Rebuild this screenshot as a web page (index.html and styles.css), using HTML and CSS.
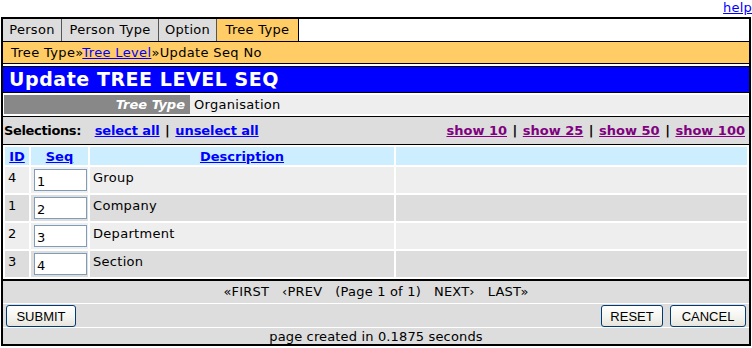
FILE: index.html
```html
<!DOCTYPE html>
<html lang="en">
<head>
  <meta charset="UTF-8" />
  <title>Update TREE LEVEL SEQ</title>
  <link rel="stylesheet" href="styles.css">
</head>
<body>
  <div class="help"><a href="#">help</a></div>
  <div class="frame">
    <div class="tabs">
      <a class="tab tab-person" href="#">Person</a>
      <a class="tab tab-ptype" href="#">Person Type</a>
      <a class="tab tab-option" href="#">Option</a>
      <a class="tab tab-tree active" href="#">Tree Type</a>
    </div>
    <div class="crumb">Tree Type&raquo;<a href="#">Tree Level</a>&raquo;Update Seq No</div>
    <h1 class="title">Update TREE LEVEL SEQ</h1>
    <div class="parent">
      <div class="parent-label">Tree Type</div>
      <div class="parent-value">Organisation</div>
    </div>
    <div class="selections">
      <div class="sel-left"><span class="sel-title">Selections:</span> <a href="#">select all</a><span class="sep">|</span><a href="#">unselect all</a></div>
      <div class="sel-right"><a href="#">show 10</a><span class="sep">|</span><a href="#">show 25</a><span class="sep">|</span><a href="#">show 50</a><span class="sep">|</span><a href="#">show 100</a></div>
    </div>
    <table class="grid">
      <thead>
        <tr>
          <th class="c-id"><a href="#">ID</a></th>
          <th class="c-seq"><a href="#">Seq</a></th>
          <th class="c-desc"><a href="#">Description</a></th>
          <th></th>
        </tr>
      </thead>
      <tbody>
        <tr><td>4</td><td><input type="text" value="1"></td><td>Group</td><td></td></tr>
        <tr><td>1</td><td><input type="text" value="2"></td><td>Company</td><td></td></tr>
        <tr><td>2</td><td><input type="text" value="3"></td><td>Department</td><td></td></tr>
        <tr><td>3</td><td><input type="text" value="4"></td><td>Section</td><td></td></tr>
      </tbody>
    </table>
    <div class="pager">
      <span>&laquo;FIRST</span>
      <span>&lsaquo;PREV</span>
      <span>(Page 1 of 1)</span>
      <span>NEXT&rsaquo;</span>
      <span>LAST&raquo;</span>
    </div>
    <div class="actions">
      <button class="btn-submit">SUBMIT</button>
      <div class="actions-right">
        <button class="btn-reset">RESET</button>
        <button class="btn-cancel">CANCEL</button>
      </div>
    </div>
    <div class="footer">page created in 0.1875 seconds</div>
  </div>
</body>
</html>
```

FILE: styles.css
```css
body {
  margin: 0;
  font-family: "DejaVu Sans", Verdana, sans-serif;
  font-size: 13px;
  letter-spacing: 0.3px;
  color: #000;
  background: #fff;
}
a {
  color: #00f;
}
.help {
  text-align: right;
  height: 17px;
  line-height: 15px;
  letter-spacing: 0.2px;
}
.frame {
  margin-left: 1px;
  width: 750px;
  box-sizing: border-box;
  border: 2px solid #000;
}
.tabs {
  display: flex;
  height: 22px;
}
.tab {
  display: block;
  text-align: center;
  line-height: 22px;
  color: #000;
  text-decoration: none;
  background: #ddd;
  border-right: 1px solid #555;
}
.tab-person { width: 58px; }
.tab-ptype { width: 96px; }
.tab-option { width: 57px; }
.tab-tree { width: 81px; }
.tab.active {
  background: #fc6;
  border-right: 1px solid #000;
}
.crumb {
  background: #fc6;
  border-top: 1px solid #000;
  border-bottom: 1px solid #000;
  height: 21px;
  line-height: 21px;
  padding-left: 8px;
  letter-spacing: 0.35px;
}
.title {
  margin: 2px 0 0;
  background: #00f;
  color: #fff;
  border-top: 1px solid #000;
  border-bottom: 1px solid #000;
  height: 25px;
  line-height: 25px;
  font-size: 19px;
  letter-spacing: 0.55px;
  padding-left: 6px;
}
.parent {
  display: flex;
  margin: 2px 1px;
  height: 19px;
  line-height: 19px;
}
.parent-label {
  width: 181px;
  padding-right: 5px;
  background: #888;
  color: #fff;
  font-weight: bold;
  font-style: italic;
  text-align: right;
  letter-spacing: 0;
  flex-shrink: 0;
}
.parent-value {
  flex: 1;
  background: #eee;
  padding-left: 4px;
}
.selections {
  display: flex;
  justify-content: space-between;
  background: #ddd;
  border-top: 1px solid #000;
  border-bottom: 1px solid #000;
  height: 27px;
  line-height: 27px;
  padding: 0 4px 0 1px;
  font-weight: bold;
  letter-spacing: 0;
}
.sel-title {
  letter-spacing: -0.35px;
  margin-right: 9px;
}
.sel-left a {
  letter-spacing: -0.1px;
}
.sep {
  margin: 0 5.5px;
}
.sel-right a {
  color: #800080;
}
.grid {
  width: 100%;
  border-collapse: separate;
  border-spacing: 2px;
  border-bottom: 1px solid #000;
}
.grid th {
  background: #cef;
  height: 18px;
  padding: 0;
  letter-spacing: 0;
}
.grid th a {
  font-weight: bold;
}
.c-id { width: 24px; }
.c-seq { width: 57px; }
.c-desc { width: 304px; }
.grid td {
  box-sizing: border-box;
  height: 26px;
  padding: 3px 0 0 3px;
  vertical-align: top;
  line-height: 16px;
}
.grid tbody tr:nth-child(odd) td { background: #eee; }
.grid tbody tr:nth-child(even) td { background: #ddd; }
.grid td:nth-child(2) {
  padding: 2px 0 0 3px;
}
.grid input {
  display: block;
  width: 53px;
  height: 22px;
  box-sizing: border-box;
  margin: 0;
  border: 1px solid #7f9db9;
  font-family: "DejaVu Sans", Verdana, sans-serif;
  font-size: 13px;
  padding: 2px 2px 0;
}
.pager {
  display: flex;
  justify-content: center;
  gap: 13px;
  background: #ddd;
  border-top: 1px solid #000;
  height: 22px;
  line-height: 22px;
  letter-spacing: 0.2px;
}
.actions {
  display: flex;
  justify-content: space-between;
  align-items: flex-start;
  background: #ddd;
  border-top: 1px solid #fff;
  height: 24px;
  padding: 1px 3px 0;
  box-sizing: border-box;
}
.actions-right {
  display: flex;
  gap: 7px;
}
.actions button {
  font-family: "Liberation Sans", Arial, sans-serif;
  font-size: 13px;
  letter-spacing: 0;
  height: 22px;
  padding: 0;
  color: #000;
  background: linear-gradient(#fff, #f3f3ee 60%, #e6e4dc);
  border: 1px solid #003c74;
  border-radius: 3px;
}
.actions .btn-submit { width: 70px; }
.actions .btn-reset { width: 62px; }
.actions .btn-cancel { width: 76px; }
.footer {
  background: #ddd;
  border-top: 1px solid #fff;
  text-align: center;
  height: 16px;
  line-height: 17px;
  letter-spacing: 0.15px;
}
```
